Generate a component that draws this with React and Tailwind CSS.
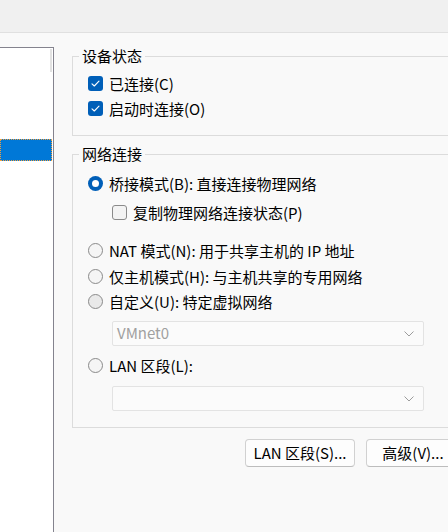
import React from 'react'

const font = { fontFamily: '"Noto Sans CJK SC", "Noto Sans", sans-serif' }

function CheckBox({ checked }) {
  if (!checked) {
    return <span className="w-[15px] h-[15px] shrink-0 rounded-[3px] border border-[#8a8a8a] bg-[#f3f3f3]" />
  }
  return (
    <span className="w-[15px] h-[15px] shrink-0 rounded-[3px] bg-[#005fb8] flex items-center justify-center">
      <svg width="11" height="11" viewBox="0 0 11 11" fill="none">
        <path d="M2 5.8l2.3 2.2L9 3.2" stroke="white" strokeWidth="1.1" strokeLinecap="round" strokeLinejoin="round" />
      </svg>
    </span>
  )
}

function Radio({ checked, dim }) {
  if (checked) {
    return (
      <span className="w-[15px] h-[15px] shrink-0 rounded-full bg-[#005fb8] flex items-center justify-center">
        <span className="w-[7px] h-[7px] rounded-full bg-white" />
      </span>
    )
  }
  return (
    <span className={`w-[15px] h-[15px] shrink-0 rounded-full border border-[#8a8a8a] ${dim ? 'bg-[#e9e9e9]' : 'bg-[#f5f5f5]'}`} />
  )
}

function Row({ children, className = '' }) {
  return <div className={`flex items-center gap-[6px] h-[25px] leading-[25px] ${className}`}>{children}</div>
}

function Select({ value, className = '' }) {
  return (
    <div className={`ml-[24px] w-[312px] h-[25px] flex items-center justify-between pl-[4px] pr-[9px] border border-[#e3e3e3] rounded-[2px] bg-[#fbfbfb] text-[#a0a0a0] ${className}`}>
      <span>{value}</span>
      <svg width="10" height="6" viewBox="0 0 10 6" fill="none">
        <path d="M0.5 0.5l4.5 4.5 4.5-4.5" stroke="#9c9c9c" strokeWidth="1" />
      </svg>
    </div>
  )
}

function Button({ children, className = '' }) {
  return (
    <button className={`h-[28px] rounded-[4px] border border-[#d1d1d1] border-b-[#bdbdbd] bg-[#fdfdfd] text-black text-[15px] leading-[26px] whitespace-nowrap ${className}`}>
      {children}
    </button>
  )
}

export default function App() {
  return (
    <div className="w-[448px] h-[532px] overflow-hidden bg-[#f9f9f9] flex flex-col text-[15px] text-black" style={font}>
      {/* top strip */}
      <div className="h-[33px] shrink-0 bg-[#f0f0f0] border-b border-[#e0e0e0]" />

      <div className="flex flex-1 min-h-0">
        {/* tree list on the left */}
        <div className="w-[54px] shrink-0 mt-[14px] bg-white border-t border-r border-[#84838e] flex flex-col">
          <div className="flex justify-end pr-[1px] mt-[1px]">
            <span className="w-[2px] h-[23px] bg-[#e2e2e2]" />
          </div>
          <div className="mt-[67px] h-[22px] mr-[1px] bg-[#0078d7] border border-dotted border-[#f0a040]" />
        </div>

        {/* settings */}
        <div className="w-[413px] shrink-0 ml-[18px] pt-[13px] flex flex-col">
          <fieldset className="border border-[#dcdcdc] pb-[14px]">
            <legend className="ml-[6px] px-[3px] h-[20px] leading-[20px]">设备状态</legend>
            <div className="pl-[15px] pt-[5px]">
              <Row><CheckBox checked /><span>已连接(C)</span></Row>
              <Row><CheckBox checked /><span>启动时连接(O)</span></Row>
            </div>
          </fieldset>

          <fieldset className="mt-[8px] border border-[#dcdcdc] pb-[16px]">
            <legend className="ml-[6px] px-[3px] h-[20px] leading-[20px]">网络连接</legend>
            <div className="pl-[15px] pt-[7px]">
              <Row><Radio checked /><span>桥接模式(B): 直接连接物理网络</span></Row>
              <Row className="mt-[4px] pl-[24px]"><CheckBox /><span>复制物理网络连接状态(P)</span></Row>
              <Row className="mt-[13px]"><Radio /><span>NAT 模式(N): 用于共享主机的 IP 地址</span></Row>
              <Row className="mt-[1px]"><Radio /><span>仅主机模式(H): 与主机共享的专用网络</span></Row>
              <Row><Radio dim /><span>自定义(U): 特定虚拟网络</span></Row>
              <Select value="VMnet0" className="mt-[7px]" />
              <Row className="mt-[7px]"><Radio /><span>LAN 区段(L):</span></Row>
              <Select value="" className="mt-[8px]" />
            </div>
          </fieldset>

          <div className="mt-[11px] flex justify-end gap-[11px] pr-[25px]">
            <Button className="w-[110px]">LAN 区段(S)...</Button>
            <Button className="w-[94px]">高级(V)...</Button>
          </div>
        </div>
      </div>
    </div>
  )
}
